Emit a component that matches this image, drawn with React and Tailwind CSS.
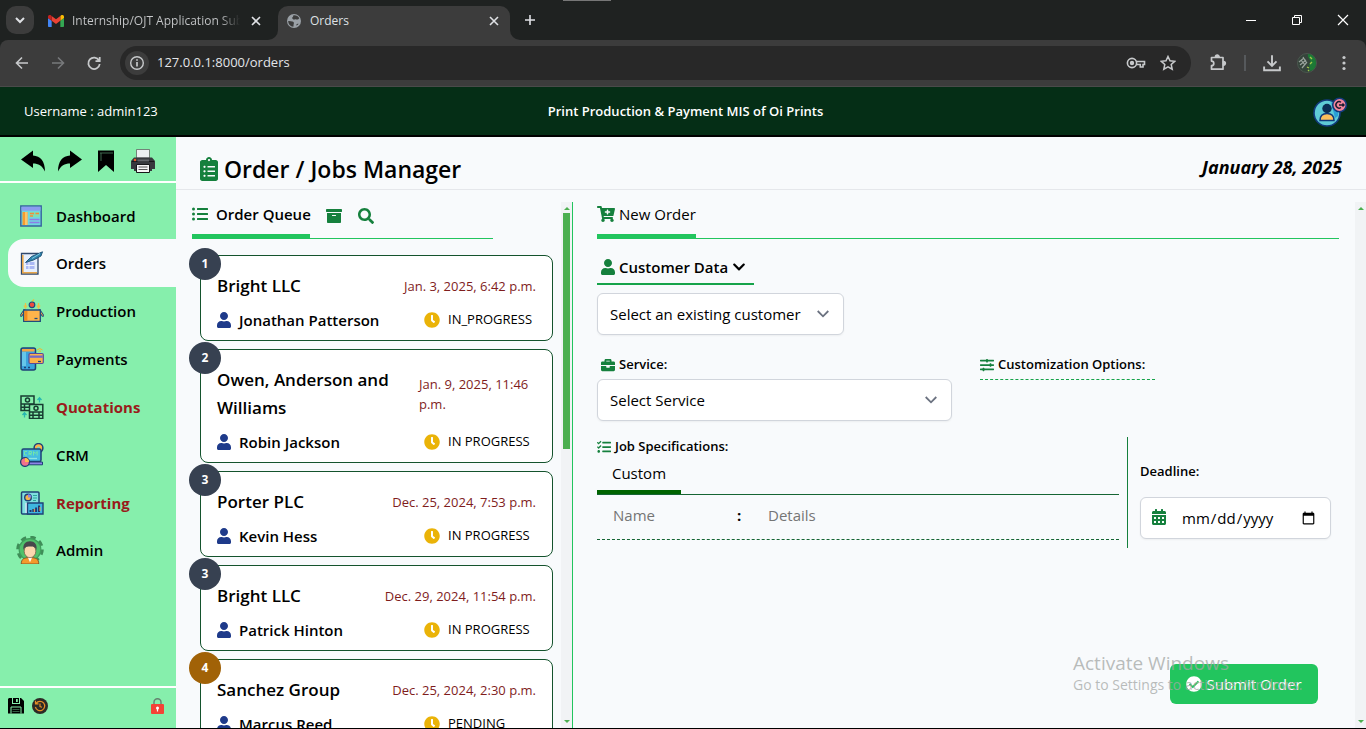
import React from "react";
import {
  FaClipboardList, FaListUl, FaArchive, FaSearch, FaUser, FaClock, FaCartPlus,
  FaChevronDown, FaBriefcase, FaSlidersH, FaTasks, FaCalendarAlt, FaCheckCircle,
} from "react-icons/fa";

/* ---------- Browser icons ---------- */

const GmailIcon = () => (
  <svg viewBox="0 0 24 18" className="h-3 w-4 shrink-0" aria-hidden="true">
    <path fill="#4285f4" d="M1.6 18H5.500V8.700L0 4.600v11.800C0 17.300.7 18 1.600 18z" />
    <path fill="#34a853" d="M18.500 18h3.900c.9 0 1.600-.7 1.600-1.600V4.600l-5.500 4.100z" />
    <path fill="#fbbc04" d="M18.500 1.600v7.100L24 4.600V2.500C24 .4 21.600-.8 19.900.5z" />
    <path fill="#ea4335" d="M5.500 8.700V1.600L12 6.500l6.500-4.900v7.100L12 13.600z" />
    <path fill="#c5221f" d="M0 2.500v2.100l5.500 4.100V1.600L4.100.5C2.400-.8 0 .4 0 2.500z" />
  </svg>
);

const GlobeIcon = () => (
  <svg viewBox="0 0 16 16" className="h-4 w-4 shrink-0" aria-hidden="true">
    <circle cx="8" cy="8" r="7" fill="#9aa0a6" />
    <path fill="#3c3c3c" d="M7.500 2.200c2.500-.4 4.800.9 5.800 3-.8 1.300-2 1.700-3 1.200-1-.6-1.700.2-3 0C6 6 5.900 4.800 6.700 4.100c.7-.6.2-1.300.8-1.900zM2.200 8c1.700-.2 3 .4 4 .5 1.500.1 2 1.300 1.600 2.200-.4 1-.1 1.800-.5 3.100C4.300 13.500 2.200 11 2.200 8zM10 12.500c.2-1.500 1.500-1.800 2.600-1.800-.6 1-1.500 1.700-2.600 1.800z" />
  </svg>
);

const Line = ({ d, className = "h-4 w-4", width = 1.6, viewBox = "0 0 16 16" }) => (
  <svg viewBox={viewBox} className={className} fill="none" stroke="currentColor" strokeWidth={width} aria-hidden="true">
    <path d={d} />
  </svg>
);

const CLOSE = "M4 4l8 8M12 4l-8 8";

const AvatarPhoto = () => (
  <svg viewBox="0 0 20 20" className="h-5 w-5" aria-hidden="true">
    <circle cx="10" cy="10" r="9.500" fill="#35443b" stroke="#4a574e" />
    <path d="M11 1c5 0 8 4 8 9s-3 8-7 8c2-3-1-5 1-8s-3-5-2-9z" fill="#1c7a36" />
    <path d="M2 9l5-4M3 12l6-5M5 15l5-6M6 4l3 5M4 7l4 5" stroke="#9aa39d" strokeWidth="1.200" />
    <path d="M13 4l2 2M15 9l-2 2M10 14l2 1M11 17l1 1" stroke="#a4c94a" strokeWidth="1.300" />
  </svg>
);

function BrowserChrome() {
  return (
    <div className="shrink-0 bg-[#1f2221] text-[#dfe1e5]">
      <div className="relative flex h-10 items-end">
        <span className="absolute left-[563px] top-0 h-px w-12 bg-[#777]" />
        <button aria-label="Search tabs" className="mb-1.5 ml-1.5 flex size-7 items-center justify-center rounded-[10px] bg-[#3c3c3c]">
          <Line d="M4 6l4 4 4-4" width={2} className="h-4 w-4" />
        </button>
        <div className="flex h-[34px] w-[244px] items-center pb-1 pl-3.5">
          <GmailIcon />
          <span className="ml-2 w-[168px] overflow-hidden whitespace-nowrap bg-linear-to-r from-[#c7c9cb] from-88% to-transparent bg-clip-text text-xs text-transparent">
            Internship/OJT Application Submission
          </span>
          <button aria-label="Close tab" className="ml-2"><Line d={CLOSE} /></button>
        </div>
        <div className="relative flex h-[34px] w-[232px] items-center rounded-t-[10px] bg-[#3c3c3c] pb-1 pl-2">
          <span className="absolute -left-2.5 bottom-0 size-2.5 bg-[#3c3c3c]"><span className="block size-2.5 rounded-br-[10px] bg-[#1f2221]" /></span>
          <span className="absolute -right-2.5 bottom-0 size-2.5 bg-[#3c3c3c]"><span className="block size-2.5 rounded-bl-[10px] bg-[#1f2221]" /></span>
          <GlobeIcon />
          <span className="ml-2 flex-1 text-xs">Orders</span>
          <button aria-label="Close tab" className="mr-2"><Line d={CLOSE} /></button>
        </div>
        <button aria-label="New tab" className="mb-3 ml-3"><Line d="M8 3v10M3 8h10" /></button>
        <div className="ml-auto flex h-10 items-center gap-[30px] pr-[15px] text-white">
          <button aria-label="Minimize"><Line d="M3 8.500h10" width={1} /></button>
          <button aria-label="Restore"><Line d="M3.500 5.500h7v7h-7zM5.500 5.500v-2h7v7h-2" width={1} /></button>
          <button aria-label="Close window"><Line d="M3 3l10 10M13 3L3 13" width={1.2} /></button>
        </div>
      </div>
      <div className="flex h-[47px] items-center rounded-t-lg border-b border-[#4a4a4a] bg-[#3c3c3c] text-[#c7c9cb]">
        <button aria-label="Back" className="ml-3.5"><Line d="M14 8H3M8 2.500L2.500 8 8 13.500" /></button>
        <button aria-label="Forward" className="ml-5 text-[#77797b]"><Line d="M2 8h11M8 2.500L13.500 8 8 13.500" /></button>
        <button aria-label="Reload" className="ml-5">
          <Line d="M13 5.500A5.700 5.700 0 1 0 13.700 9M13.700 2v4.200H9.500" width={1.8} />
        </button>
        <div className="ml-[18px] flex h-[34px] flex-1 items-center rounded-full bg-[#282828] pl-[5px] pr-[15px]">
          <span className="flex size-6 items-center justify-center rounded-full bg-[#3c3c3c]">
            <svg viewBox="0 0 16 16" className="h-4 w-4" fill="none" stroke="currentColor" strokeWidth="1.400" aria-hidden="true">
              <circle cx="8" cy="8" r="6.300" /><path d="M8 7v4.500M8 4.300v1.500" strokeWidth="1.700" />
            </svg>
          </span>
          <input aria-label="Address" defaultValue="127.0.0.1:8000/orders" className="ml-2 min-w-0 flex-1 bg-transparent text-[13px] text-[#e3e5e8] outline-none" />
          <button aria-label="Passwords">
            <svg viewBox="0 0 20 12" className="h-3 w-5" fill="none" stroke="currentColor" strokeWidth="1.600" aria-hidden="true">
              <circle cx="6" cy="6" r="4.600" /><circle cx="6" cy="6" r="1.400" fill="currentColor" />
              <path d="M10.500 4.500H18.500v3H17v2.500h-2.700V7.500h-3.800" />
            </svg>
          </button>
          <button aria-label="Bookmark this page" className="ml-3.5"><Line d="M8 1.500l2 4.300 4.700.5-3.500 3.200 1 4.700L8 11.800l-4.200 2.400 1-4.700L1.300 6.300 6 5.800z" width={1.5} /></button>
        </div>
        <button aria-label="Extensions" className="ml-[18px]">
          <svg viewBox="0 0 18 18" className="size-[18px]" fill="none" stroke="currentColor" strokeWidth="1.700" strokeLinejoin="round" aria-hidden="true">
            <path d="M2.500 3.500H14v11.700H2.500v-3.500a2.300 2.300 0 0 0 0-4.600z" />
            <path d="M6.500 3a1.800 1.800 0 0 1 3.600 0zM14.500 7.500a1.800 1.800 0 0 1 0 3.600z" fill="currentColor" />
          </svg>
        </button>
        <span className="ml-[17px] h-4 w-0.5 bg-[#56595c]" />
        <button aria-label="Downloads" className="ml-[17px]"><Line d="M8 1v9M4 6.500L8 10.500l4-4M1 11v3.500h14V11" className="h-[18px] w-[18px]" width={1.700} /></button>
        <button aria-label="Profile" className="ml-4"><AvatarPhoto /></button>
        <button aria-label="Menu" className="ml-[19px] mr-[14px]">
          <svg viewBox="0 0 16 16" className="h-4 w-4" fill="currentColor" aria-hidden="true">
            <circle cx="8" cy="2.500" r="1.600" /><circle cx="8" cy="8" r="1.600" /><circle cx="8" cy="13.500" r="1.600" />
          </svg>
        </button>
      </div>
    </div>
  );
}

/* ---------- Page icons ---------- */

const AccountIcon = () => (
  <svg viewBox="0 0 34 30" className="h-[30px] w-[34px]" aria-hidden="true">
    <circle cx="14" cy="16" r="13" fill="#5fcbd6" stroke="#123a7c" strokeWidth="1.600" />
    <path d="M18 5c5 3 8 7 7 14l-3 2z" fill="#2a9fd8" />
    <circle cx="14" cy="11.500" r="4.700" fill="#0b2d55" />
    <path d="M7 23.500c0-5 3-7 7-7s7 2 7 7z" fill="#fdbf5c" stroke="#123a7c" strokeWidth="1.500" />
    <circle cx="26.500" cy="8" r="6.800" fill="#f4859b" stroke="#123a7c" strokeWidth="1.600" />
    <path d="M28 5.300a3.200 3.200 0 1 0 0 5.200M26 8h5M29.500 6.500L31 8l-1.500 1.500" fill="none" stroke="#1a1a2e" strokeWidth="1.400" />
  </svg>
);

const UndoArrow = ({ flip }) => (
  <svg viewBox="0 0 24 22" className={flip ? "h-[22px] w-6 -scale-x-100" : "h-[22px] w-6"} aria-hidden="true">
    <path d="M0 9.500L12 .5V5.500C19.500 6 24 11 24 21.500 21 15.500 17.500 13.500 12 13.500V18z" />
  </svg>
);

const BookmarkShape = () => (
  <svg viewBox="0 0 16 22" className="h-[22px] w-4" aria-hidden="true">
    <path d="M0 .500h16V22l-8-7-8 7z" /><path d="M2 3h13M3 3v8" stroke="#4c8060" strokeWidth=".8" />
  </svg>
);

const PrinterIcon = () => (
  <svg viewBox="0 0 24 24" className="size-6" aria-hidden="true">
    <path d="M5.500.5h13V9h-13z" fill="#eceff1" stroke="#555" strokeWidth=".7" />
    <path d="M3 8.500h18l3 3.500v8h-3v2H3v-2H0v-8z" fill="#37393d" />
    <path d="M1 12.500h22" stroke="#17181a" /><circle cx="4" cy="11" r="1.200" fill="#f05a28" />
    <path d="M6.500 10.500H18v2H6.500z" fill="#63666b" />
    <path d="M5.500 15.500h13v8h-13z" fill="#f5f5f5" stroke="#17181a" /><path d="M7.500 18h9M7.500 20.500h9" stroke="#555" />
  </svg>
);

const NavSvg = ({ children, big }) => (
  <svg viewBox="0 0 24 24" className={big ? "-ml-1 mr-0 size-7" : "size-6"} aria-hidden="true">{children}</svg>
);

const navIcons = {
  dashboard: (
    <NavSvg>
      <path d="M.8 2h20.400v20H.8z" fill="#6fd6df" stroke="#37639e" strokeWidth="1.400" />
      <path d="M1.500 2.700h19v4h-19z" fill="#8c9cf0" /><path d="M2.500 8h5v13h-5z" fill="#f79c2e" /><path d="M5 8h2.500v13H5z" fill="#fcc56a" />
      <path d="M9.500 8h10v5h-10z" fill="#7ce0b4" /><path d="M10 9.500h4M15.500 9.500h3.500M10 12h3" stroke="#f28c3a" strokeWidth="1.300" />
      <path d="M9.500 15.500h10M9.500 18.500h10" stroke="#8e7be8" strokeWidth="1.700" />
    </NavSvg>
  ),
  orders: (
    <NavSvg>
      <path d="M1.500 2.500h16.500V23H1.500z" fill="#e6effc" stroke="#31486b" strokeWidth="1.300" />
      <path d="M2.800 4v17.700H17" fill="none" stroke="#e7a54b" strokeWidth="1.600" />
      <path d="M6 11h8.500v7H6z" fill="#aab8f5" /><path d="M9 11v7M6 14.500h8.500" stroke="#fff" strokeWidth=".8" />
      <path d="M5.500 11.500L11.500 5.500 22.500.8 21 5 13.500 9z" fill="#2f86ad" stroke="#1c4d73" strokeWidth=".9" />
      <path d="M12 7.500l8-5" stroke="#7cc6df" />
    </NavSvg>
  ),
  production: (
    <NavSvg>
      <path d="M5.500 4v5M18.500 4v5M4 6.500L5.500 9 7 6.500M17 6.500L18.500 9 20 6.500" fill="none" stroke="#e9c24a" strokeWidth="1.300" />
      <path d="M12 2.500l2-2" stroke="#e8c23a" strokeWidth="1.300" />
      <circle cx="12" cy="5.800" r="2.800" fill="#f04e3e" stroke="#1f4b7d" strokeWidth="1.200" />
      <path d="M4.500 11.500L1.200 16.500M19.500 11.500l3.300 5" stroke="#1f4b7d" strokeWidth="2.600" strokeLinecap="round" />
      <path d="M4.500 11.500L1.200 16.500M19.500 11.500l3.300 5" stroke="#f3a443" strokeLinecap="round" />
      <path d="M3.700 11h16.600v11.300H3.700z" fill="#fdb44b" stroke="#1f4b7d" strokeWidth="1.300" />
      <path d="M4.400 12h3v9.600h-3z" fill="#f28a1f" /><path d="M14.500 19.500h3" stroke="#1f4b7d" strokeWidth="1.300" />
    </NavSvg>
  ),
  payments: (
    <NavSvg>
      <rect x="1" y="1" width="14.500" height="22" rx="2" fill="#3aa3dc" stroke="#1f4277" strokeWidth="1.500" />
      <path d="M2 2h12.500v2.500H2z" fill="#f3a443" /><path d="M2 5h4v14H2z" fill="#66c6e9" />
      <path d="M4 20.500h2M8 20.500h2" stroke="#1f4277" strokeWidth="1.500" />
      <path d="M17 3q3-3 5.500 0M18.500 4.500q1.200-1.200 2.500 0" fill="none" stroke="#f1b82d" />
      <rect x="9" y="6.500" width="14.300" height="10" rx="1.200" fill="#fcb14b" stroke="#5a4a9c" strokeWidth="1.200" />
      <path d="M9.500 8.500h13.300v2.300H9.500z" fill="#7469c8" /><path d="M18 14.500h3" stroke="#1f4277" strokeWidth="1.300" />
    </NavSvg>
  ),
  quotations: (
    <NavSvg>
      <g fill="none" stroke="#173d31" strokeWidth="1.500">
        <path d="M1 1h13v8H1zM1 9v6.500h8M1 12.300h8M4.500 9.500v6" /><circle cx="7.500" cy="5" r="2" />
        <path d="M9.500 9.500h13.300v7.500H9.500zM9.500 17v6.500h13.300V17M9.500 20.300h13.300M13 17v6.500M19 17v6.500" /><circle cx="16" cy="13.200" r="2" />
      </g>
      <path d="M19.500 7.500V3M17.500 5l2-2.200 2 2.200M4.500 22.500V18M2.500 20l2-2.200 2 2.200" fill="none" stroke="#27b6b0" strokeWidth="1.300" />
    </NavSvg>
  ),
  crm: (
    <NavSvg>
      <circle cx="18.500" cy="5" r="4.400" fill="#fbb24c" stroke="#1f4277" strokeWidth="1.500" /><circle cx="18.500" cy="5" r="1.500" fill="#70d7c5" />
      <rect x="2" y="6" width="19" height="12.500" rx="1.500" fill="#46bde0" stroke="#1f4277" strokeWidth="1.500" />
      <path d="M7 8.500H4.500v3.500H7M9 12V8.500h2.500v2H9l2.800 1.700M13.500 12.500v-4l1.800 2 1.800-2v4" fill="none" stroke="#72e7a8" />
      <path d="M8 15.500h9" stroke="#8ce4e4" strokeWidth="1.300" />
      <path d="M8 19h14.500v2.800H8z" fill="#8d83e6" stroke="#1f4277" />
      <circle cx="5" cy="19" r="4.400" fill="#f2728d" stroke="#1f4277" strokeWidth="1.300" /><path d="M5 19v-4a4 4 0 0 1 4 4z" fill="#fcc04f" />
    </NavSvg>
  ),
  reporting: (
    <NavSvg>
      <rect x="1.500" y="1" width="17.500" height="22" rx="1" fill="#80dfe0" stroke="#1f4277" strokeWidth="1.500" />
      <path d="M5.500 12h9v10h-9z" fill="#e8f0ff" />
      <circle cx="8" cy="6.500" r="3.300" fill="#f4b24d" stroke="#1f4277" strokeWidth="1.400" /><path d="M8 6.500V3.200a3.300 3.300 0 0 1 3.300 3.300z" fill="#8d83e6" />
      <path d="M13 4.500h4M13 7h4M13 9.500h3" stroke="#2aa69b" />
      <path d="M7.500 12h15.500v11H7.500z" fill="#3eb6e0" stroke="#1f4277" strokeWidth="1.400" />
      <path d="M10.500 21v-2M13.300 21v-3M16.100 21v-4.500M19 21v-6.500" stroke="#24356f" strokeWidth="2" /><path d="M14.300 21v-3M20 20v-4" stroke="#f3a443" />
    </NavSvg>
  ),
  admin: (
    <NavSvg big>
      <circle cx="12" cy="11.500" r="10.300" fill="none" stroke="#3f8d58" strokeWidth="3" strokeDasharray="4.500 3.590" />
      <circle cx="12" cy="11.500" r="9.300" fill="#4fc26b" stroke="#3f9d5c" />
      <path d="M4.500 24c0-4.500 2.500-5.500 7.500-5.500s7.500 1 7.500 5.500z" fill="#f49a2c" stroke="#7a4a20" strokeWidth=".7" />
      <path d="M10 18h4l-2 4.500z" fill="#fff" />
      <ellipse cx="12" cy="13" rx="5" ry="5.600" fill="#fbd7ae" stroke="#70523c" strokeWidth=".6" />
      <path d="M6.500 12c-1-5 1.800-7.500 5.500-7.500s6.500 2.500 5.500 7.500c-1-2.500-2-3-5.500-3s-4.500.5-5.500 3z" fill="#47484b" />
    </NavSvg>
  ),
};

const SaveIcon = () => (
  <svg viewBox="0 0 16 16" className="size-4" aria-hidden="true">
    <path d="M1 0h12l3 3v12.500H0V1z" /><path d="M4 0h8v6H4z" fill="#86efac" /><path d="M5 0h6v5H5z" /><path d="M8 1h1.800v3H8z" fill="#86efac" />
    <path d="M3 15.500V9h10v6.500" fill="none" stroke="#86efac" /><path d="M4.500 11.500h7M4.500 13.500h7" stroke="#4b8761" strokeWidth=".7" />
  </svg>
);

const RestoreIcon = () => (
  <svg viewBox="0 0 16 16" className="size-4" aria-hidden="true">
    <circle cx="8" cy="8" r="8" fill="#2d2a26" />
    <path d="M4.200 5.200A4.700 4.700 0 1 1 3.400 9M3.500 2.800v3h3M8 5.500v3l2 .8" fill="none" stroke="#e58e26" strokeWidth="1.200" />
  </svg>
);

const LockIcon = () => (
  <svg viewBox="0 0 13 16" className="h-4 w-[13px]" aria-hidden="true">
    <path d="M3 7V4.200a3.500 3.500 0 0 1 7 0V7" fill="none" stroke="#66806f" strokeWidth="1.400" />
    <rect y="6" width="13" height="10" rx="1" fill="#f44336" /><circle cx="6.500" cy="10" r="1.500" fill="#fff" /><path d="M5.900 10.500h1.200v3H5.900z" fill="#fff" />
  </svg>
);

/* ---------- Page ---------- */

const nav = [
  { id: "dashboard", label: "Dashboard", cls: "h-[46px] font-semibold" },
  { id: "orders", label: "Orders", cls: "h-12 rounded-l-2xl bg-slate-50 font-semibold", current: true },
  { id: "production", label: "Production", cls: "h-12 font-semibold" },
  { id: "payments", label: "Payments", cls: "h-12 font-semibold" },
  { id: "quotations", label: "Quotations", cls: "h-12 font-bold text-[#991b1b]" },
  { id: "crm", label: "CRM", cls: "h-12 font-semibold" },
  { id: "reporting", label: "Reporting", cls: "h-12 font-bold text-[#991b1b]" },
  { id: "admin", label: "Admin", cls: "h-[46px] font-semibold" },
];

function Sidebar() {
  return (
    <aside className="flex w-44 shrink-0 flex-col bg-[#86efac]">
      <div className="flex h-[46px] shrink-0 items-center justify-between border-b-2 border-white pl-[21px] pr-[21px] pt-1">
        <div className="flex items-center gap-[13px]">
          <button aria-label="Back"><UndoArrow /></button>
          <button aria-label="Forward"><UndoArrow flip /></button>
        </div>
        <div className="flex items-center gap-[17px]">
          <button aria-label="Bookmark"><BookmarkShape /></button>
          <button aria-label="Print"><PrinterIcon /></button>
        </div>
      </div>
      <nav className="flex-1 pl-2 pt-2.5 text-[15px]">
        {nav.map((n) => (
          <a key={n.id} href={"#" + n.id} aria-current={n.current ? "page" : undefined} className={"flex items-center gap-3 pl-3 " + n.cls}>
            {navIcons[n.id]}
            {n.label}
          </a>
        ))}
      </nav>
      <div className="flex h-[42px] shrink-0 items-center gap-2 border-t-2 border-white pb-1 pl-2 pr-3">
        <button aria-label="Save"><SaveIcon /></button>
        <button aria-label="Restore"><RestoreIcon /></button>
        <button aria-label="Lock" className="ml-auto"><LockIcon /></button>
      </div>
    </aside>
  );
}

const orders = [
  { n: 1, company: "Bright LLC", date: "Jan. 3, 2025, 6:42 p.m.", person: "Jonathan Patterson", status: "IN_PROGRESS" },
  { n: 2, company: "Owen, Anderson and Williams", date: "Jan. 9, 2025, 11:46 p.m.", person: "Robin Jackson", status: "IN PROGRESS", wrap: true },
  { n: 3, company: "Porter PLC", date: "Dec. 25, 2024, 7:53 p.m.", person: "Kevin Hess", status: "IN PROGRESS" },
  { n: 3, company: "Bright LLC", date: "Dec. 29, 2024, 11:54 p.m.", person: "Patrick Hinton", status: "IN PROGRESS" },
  { n: 4, company: "Sanchez Group", date: "Dec. 25, 2024, 2:30 p.m.", person: "Marcus Reed", status: "PENDING", amber: true },
];

function OrderCard({ o }) {
  return (
    <li className="relative rounded-lg border border-[#14532d] bg-white px-4 pb-2 pt-4">
      <span className={"absolute -left-3 -top-2 flex size-8 items-center justify-center rounded-full text-xs font-bold text-white " + (o.amber ? "bg-[#a16207]" : "bg-[#374151]")}>
        {o.n}
      </span>
      <div className="flex items-center justify-between">
        <h3 className="text-[17px] font-semibold leading-7">{o.company}</h3>
        <p className={"shrink-0 text-[13px] leading-5 text-[#7f1d1d] " + (o.wrap ? "w-[117px]" : "")}>{o.date}</p>
      </div>
      <div className="mt-2 flex h-6 items-center text-[15px]">
        <FaUser className="h-4 w-3.5 text-[#1e3a8a]" />
        <span className="ml-2 font-semibold">{o.person}</span>
        <span className="ml-auto flex w-28 items-center gap-2 whitespace-nowrap text-[13px]">
          <FaClock className="size-4 text-[#eab308]" />
          {o.status}
        </span>
      </div>
    </li>
  );
}

const ScrollRail = ({ thumb }) => (
  <div className="flex w-[11px] shrink-0 flex-col items-center bg-[#f1f3f5] py-1" aria-hidden="true">
    <svg viewBox="0 0 6 3" className="mt-px h-[3px] w-1.5"><path d="M0 3l3-3 3 3z" fill="#4caf50" /></svg>
    {thumb && <span className="mt-[3px] h-[236px] w-[7px] bg-[#4caf50]" />}
    <svg viewBox="0 0 6 3" className="mb-px mt-auto h-[3px] w-1.5"><path d="M0 0l3 3 3-3z" fill="#4caf50" /></svg>
  </div>
);

function OrderQueue() {
  return (
    <section className="flex w-[397px] shrink-0 border-r border-[#22c55e]">
      <div className="flex min-h-0 flex-1 flex-col overflow-hidden pl-4 pr-2">
        <div className="mr-[60px] flex h-[37px] shrink-0 gap-4 border-b border-[#22c55e]">
          <button className="flex h-9 w-[118px] items-center gap-2 border-b-4 border-[#22c55e] pb-2 text-[15px] font-semibold">
            <FaListUl className="size-4 shrink-0 text-[#15803d]" />
            <span className="whitespace-nowrap">Order Queue</span>
          </button>
          <button aria-label="Archive" className="pb-2"><FaArchive className="size-4 text-[#15803d]" /></button>
          <button aria-label="Search" className="pb-2"><FaSearch className="size-4 text-[#15803d]" /></button>
        </div>
        <ul className="ml-2 mt-4 space-y-2">
          {orders.map((o, i) => <OrderCard key={i} o={o} />)}
        </ul>
      </div>
      <ScrollRail thumb />
    </section>
  );
}

const fieldClass = "h-[42px] w-full appearance-none rounded-md border border-gray-300 bg-white px-3 text-[15px] shadow-xs";

function SelectField({ id, label, option, className }) {
  return (
    <div className={"relative " + className}>
      <select id={id} aria-label={label} className={fieldClass}>
        <option>{option}</option>
      </select>
      <svg viewBox="0 0 12 8" className="pointer-events-none absolute right-[15px] top-[17px] h-2 w-3" fill="none" stroke="#6b7280" strokeWidth="1.800" aria-hidden="true">
        <path d="M.7 1L6 6.300 11.300 1" />
      </svg>
    </div>
  );
}

function NewOrder() {
  return (
    <section className="relative flex min-w-0 flex-1 flex-col overflow-hidden pl-6 pr-4">
      <div className="flex h-[37px] shrink-0 border-b border-[#22c55e]">
        <button className="flex h-9 items-center gap-1 border-b-4 border-[#22c55e] pb-2 text-[15px]">
          <FaCartPlus className="h-4 w-[18px] text-[#15803d]" />
          New Order
        </button>
      </div>

      <button className="mt-3 flex h-[34px] w-[157px] items-center gap-1 border-b-2 border-[#16a34a] pl-1 text-[15px] font-semibold">
        <FaUser className="h-4 w-3.5 text-[#15803d]" />
        Customer Data
        <FaChevronDown className="size-3.5" />
      </button>
      <SelectField id="customer" label="Customer" option="Select an existing customer" className="mt-2 w-[247px]" />

      <div className="mt-5 flex gap-7">
        <div className="w-[355px]">
          <label htmlFor="service" className="mb-1 flex h-5 items-center gap-1 pl-1 text-[13px] font-semibold">
            <FaBriefcase className="size-3.5 text-[#15803d]" />Service:
          </label>
          <SelectField id="service" label="Service" option="Select Service" />
        </div>
        <h3 className="flex h-[25px] w-[175px] items-center gap-1 whitespace-nowrap border-b border-dashed border-[#16a34a] pb-1 text-[13px] font-semibold">
          <FaSlidersH className="size-3.5 shrink-0 text-[#15803d]" />Customization Options:
        </h3>
      </div>

      <div className="mt-4 flex">
        <div className="min-w-0 flex-1 pr-2">
          <h3 className="flex h-5 items-center gap-1 text-[13px] font-semibold">
            <FaTasks className="size-3.5 text-[#15803d]" />Job Specifications:
          </h3>
          <div className="flex h-[38px] border-b border-[#166534]">
            <button className="flex w-21 items-center justify-center border-b-4 border-[#006400] text-[15px]">Custom</button>
          </div>
          <div className="flex h-[45px] items-center border-b border-dashed border-[#166534] pb-1 pl-4 text-[15px]">
            <input aria-label="Name" placeholder="Name" className="w-[120px] placeholder:text-[#757575]" />
            <span className="w-[35px] pl-1 font-bold">:</span>
            <input aria-label="Details" placeholder="Details" className="min-w-0 flex-1 placeholder:text-[#757575]" />
          </div>
        </div>
        <div className="flex h-[111px] w-[212px] flex-col border-l border-[#15803d] pl-3 pr-2 pt-6">
          <label htmlFor="deadline" className="h-5 text-[13px] font-semibold leading-5">Deadline:</label>
          <div className="relative mt-4">
            <FaCalendarAlt className="pointer-events-none absolute left-3 top-3 h-4 w-3.5 text-[#15803d]" />
            <input id="deadline" type="date" className="h-[42px] w-full rounded-md border border-gray-300 bg-white pl-10 pr-3 text-[15px] shadow-xs" />
          </div>
        </div>
      </div>

      <button className="absolute bottom-6 right-[37px] flex h-10 w-37 items-center justify-center gap-1 rounded-md bg-[#22c55e] text-[15px] text-white">
        <FaCheckCircle className="size-4" />
        Submit Order
      </button>
      <div className="pointer-events-none absolute bottom-[33px] right-[47px] w-[235px] whitespace-nowrap text-[#a3a7a5]/75">
        <p className="text-[19px] leading-6">Activate Windows</p>
        <p className="text-sm leading-5">Go to Settings to activate Windows.</p>
      </div>
    </section>
  );
}

export default function App() {
  return (
    <div className="flex h-screen flex-col overflow-hidden border-b border-black bg-slate-50 text-black" style={{ fontFamily: '"Open Sans", "Noto Sans", sans-serif' }}>
      <BrowserChrome />
      <header className="grid h-[50px] shrink-0 grid-cols-3 items-center border-b-2 border-black bg-[#052e16] pl-6 pr-[19px] pt-0.5 text-[13px] text-white">
        <span>Username : admin123</span>
        <span className="whitespace-nowrap text-center font-semibold">Print Production &amp; Payment MIS of Oi Prints</span>
        <button aria-label="Account" className="justify-self-end"><AccountIcon /></button>
      </header>
      <div className="flex min-h-0 flex-1">
        <Sidebar />
        <main className="flex min-w-0 flex-1 flex-col">
          <div className="flex h-[53px] shrink-0 items-center justify-between border-b border-gray-200 pl-6 pr-6 pt-3">
            <h1 className="flex items-center gap-1.5 text-[23px] font-semibold leading-8">
              <FaClipboardList className="h-6 w-[18px] text-[#15803d]" />
              Order / Jobs Manager
            </h1>
            <time className="pb-1 text-[18px] font-bold italic">January 28, 2025</time>
          </div>
          <div className="mt-3 flex min-h-0 flex-1">
            <OrderQueue />
            <NewOrder />
            <ScrollRail />
          </div>
        </main>
      </div>
    </div>
  );
}
